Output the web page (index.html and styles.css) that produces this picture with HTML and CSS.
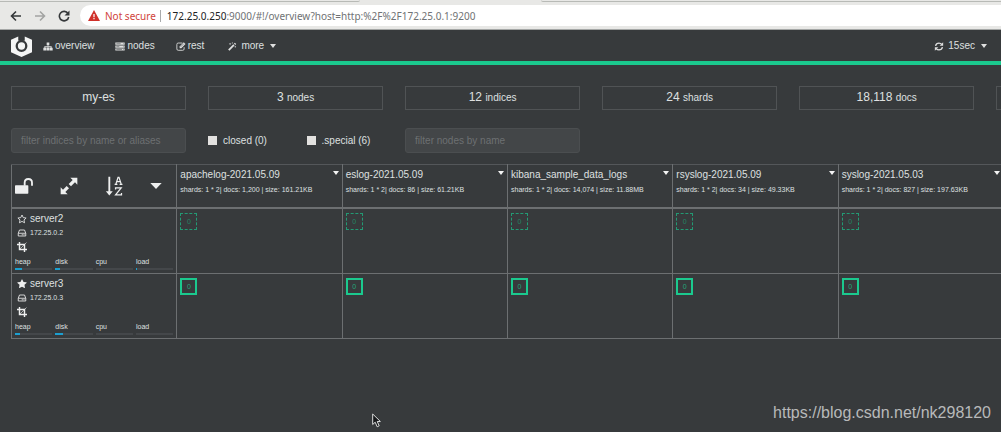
FILE: index.html
```html
<!DOCTYPE html>
<html lang="en">
<head>
<meta charset="utf-8">
<title>my-es overview</title>
<link rel="stylesheet" href="styles.css">
</head>
<body>
<svg class="defs" aria-hidden="true">
  <symbol id="caret" viewBox="0 0 6 4"><path d="M0 0h6L3 4z"/></symbol>
  <symbol id="host" viewBox="0 0 18 16"><path fill="none" stroke="currentColor" stroke-width="1.7" d="M1.5 8.5 4 2h10l2.500 6.500V14h-15zM1.500 8.500h15"/><path d="M8.500 10.500h2v2h-2zM12 10.500h2v2h-2z"/></symbol>
  <symbol id="crop" viewBox="0 0 18 18"><path fill="none" stroke="currentColor" stroke-width="2.600" d="M0 4.500h13.500V18M4.500 0v13.500H18"/><path fill="none" stroke="currentColor" stroke-width="1.200" d="M5 13 17 1"/></symbol>
  <symbol id="star" viewBox="0 0 1792 1792"><path d="M1728 647q0 22-26 48l-363 354 86 500q1 7 1 20 0 21-10.5 35.5t-30.5 14.5q-19 0-40-12l-449-236-449 236q-22 12-40 12-21 0-31.5-14.5t-10.5-35.5q0-6 2-20l86-500-364-354q-25-27-25-48 0-37 56-46l502-73 225-455q19-41 49-41t49 41l225 455 502 73q56 9 56 46z"/></symbol>
  <symbol id="star-o" viewBox="0 0 18 18"><path fill="none" stroke="currentColor" stroke-width="1.500" stroke-linejoin="round" d="m9 1.800 2.200 4.700 5.200.7-3.800 3.500 1 5.100L9 13.300l-4.600 2.500 1-5.100-3.800-3.500 5.200-.7z"/></symbol>
</svg>

<header class="browser">
  <div class="tabs"><span class="tab-edge tab-left"></span><span class="tab-edge tab-right"></span></div>
  <div class="toolbar">
    <button class="tool" aria-label="Back"><svg viewBox="0 0 12 12"><path d="M11 6H1.500M6 1.500 1.500 6 6 10.500"/></svg></button>
    <button class="tool tool-off" aria-label="Forward"><svg viewBox="0 0 12 12"><path d="M1 6h9.500M6 1.500 10.500 6 6 10.500"/></svg></button>
    <button class="tool" aria-label="Reload"><svg viewBox="0 0 12 12"><path d="M10 3.500A4.700 4.700 0 1 0 10.700 7"/><path class="tip" d="M11.500.5v5h-5z"/></svg></button>
    <div class="address">
      <svg class="warn" viewBox="0 0 12 11"><path fill="#d0312a" d="M6 0 12 11H0z"/><path fill="#fff" d="M5.400 4h1.200v3.200H5.400zM5.400 8h1.200v1.300H5.400z"/></svg>
      <span class="insecure">Not secure</span>
      <span class="url"><b>172.25.0.250</b>:9000/#!/overview?host=http:%2F%2F172.25.0.1:9200</span>
    </div>
  </div>
</header>

<nav class="navbar">
  <a class="logo" href="#" aria-label="Home"><svg viewBox="0 0 22 23"><path fill="#f4f5f5" d="M7.600 1.500 0 5v13l11 5 11-5V5l-7.600-3.500V6h-1.900V.5h-3V6H7.600z"/><circle cx="11" cy="11.500" r="5" fill="none" stroke="#373a3c" stroke-width="2.400"/><path fill="#373a3c" d="M9 0h4v7H9z"/></svg></a>
  <a class="item" href="#"><svg viewBox="0 0 30 26" class="nav-icon"><path d="M11 1h8v8h-3v3h10v5h3v8h-9v-8h3v-2h-7v2h3v8h-8v-8h3v-2H7v2h3v8H1v-8h3v-5h10V9h-3z"/></svg>overview</a>
  <a class="item" href="#"><svg viewBox="0 0 30 26" class="nav-icon"><path d="M1 1h28v7H1zM1 10h28v7H1zM1 19h28v6H1z"/><path stroke="#373a3c" stroke-width="1.500" d="M4 4.500h13M4 13.500h9M4 22h17M24 4.500h2M24 13.500h2M24 22h2"/></svg>nodes</a>
  <a class="item" href="#"><svg viewBox="0 0 28 26" class="nav-icon"><path fill="none" stroke="currentColor" stroke-width="2.500" d="M18 3H6Q2 3 2 7v13q0 4 4 4h13q4 0 4-4v-5"/><path d="m10 13 12-12 5 5-12 12H10z"/><path stroke="#373a3c" stroke-width="1.500" d="m13 14 9-9"/></svg>rest</a>
  <a class="item more" href="#"><svg viewBox="0 0 28 28" class="nav-icon"><path d="m2 23 16-16 4 4L6 27zM20 5l3-3 4 4-3 3zM8 2l1 3 3 1-3 1-1 3-1-3-3-1 3-1zM15 0l.8 2 2 .8-2 .8-.8 2-.8-2-2-.8 2-.8zM24 12l1 2 2 1-2 1-1 2-1-2-2-1 2-1z"/></svg><span class="gap">more</span><svg class="caret"><use href="#caret"/></svg></a>
  <a class="item refresh" href="#"><svg viewBox="0 0 26 26" class="nav-icon"><path fill="none" stroke="currentColor" stroke-width="3.800" d="M3 11q2-8 10-8 5 0 8 4M23 15q-2 8-10 8-5 0-8-4"/><path d="M25 1v10H15zM1 25V15h10z"/></svg><span class="gap">15sec</span><svg class="caret"><use href="#caret"/></svg></a>
</nav>

<main class="page">
  <section class="grid stats">
    <div class="stat">my-es</div>
    <div class="stat">3 <small>nodes</small></div>
    <div class="stat">12 <small>indices</small></div>
    <div class="stat">24 <small>shards</small></div>
    <div class="stat">18,118 <small>docs</small></div>
    <div class="stat"></div>
  </section>

  <form class="grid filters">
    <input class="field" type="text" aria-label="Filter indices" placeholder="filter indices by name or aliases">
    <div class="checks">
      <label><input type="checkbox">closed (0)</label>
      <label><input type="checkbox">.special (6)</label>
    </div>
    <input class="field" type="text" aria-label="Filter nodes" placeholder="filter nodes by name">
  </form>

  <table class="cluster">
    <thead>
      <tr>
        <th>
          <div class="actions">
            <button aria-label="Disable allocation"><svg viewBox="0 0 54 48"><path d="M2 22h36q2 0 2 2v21q0 2-2 2H2q-2 0-2-2V24q0-2 2-2z"/><path fill="none" stroke="currentColor" stroke-width="5.500" d="M29 23v-9q0-11 11-11t11 11v9"/></svg></button>
            <button aria-label="Expand"><svg viewBox="0 0 54 54"><path d="M31 2h21v21l-7-7-12 12-7-7L38 9zM2 52V31l7 7 11-11 7 7-11 11 7 7z"/></svg></button>
            <button aria-label="Sort by name"><svg viewBox="0 0 54 64"><path d="M9 2h6v47h8L12 62 1 49h8z"/><path fill="none" stroke="currentColor" stroke-width="4" d="M33 26 40 4h3l7 22M36 18h12M29 27h9M45 27h9M32 43v-5h18L32 60h19v-6"/></svg></button>
            <button aria-label="More"><svg class="drop" viewBox="0 0 34 18"><path d="M0 0h34L17 18z"/></svg></button>
          </div>
        </th>
        <th><div class="index"><div><a href="#">apachelog-2021.05.09</a><p>shards: 1 * 2| docs: 1,200 | size: 161.21KB</p></div><svg class="caret"><use href="#caret"/></svg></div></th>
        <th><div class="index"><div><a href="#">eslog-2021.05.09</a><p>shards: 1 * 2| docs: 86 | size: 61.21KB</p></div><svg class="caret"><use href="#caret"/></svg></div></th>
        <th><div class="index"><div><a href="#">kibana_sample_data_logs</a><p>shards: 1 * 2| docs: 14,074 | size: 11.88MB</p></div><svg class="caret"><use href="#caret"/></svg></div></th>
        <th><div class="index"><div><a href="#">rsyslog-2021.05.09</a><p>shards: 1 * 2| docs: 34 | size: 49.33KB</p></div><svg class="caret"><use href="#caret"/></svg></div></th>
        <th><div class="index"><div><a href="#">syslog-2021.05.03</a><p>shards: 1 * 2| docs: 827 | size: 197.63KB</p></div><svg class="caret"><use href="#caret"/></svg></div></th>
      </tr>
    </thead>
    <tbody>
      <tr>
        <td>
          <div class="node">
            <div class="line name"><svg><use href="#star-o"/></svg>server2</div>
            <div class="line ip"><svg><use href="#host"/></svg>172.25.0.2</div>
            <div class="line"><svg><use href="#crop"/></svg></div>
            <div class="meters">
              <div>heap<i><b style="width:19%"></b></i></div>
              <div>disk<i><b style="width:13%"></b></i></div>
              <div>cpu<i></i></div>
              <div>load<i><b style="width:3%"></b></i></div>
            </div>
          </div>
        </td>
        <td><span class="shard replica">0</span></td>
        <td><span class="shard replica">0</span></td>
        <td><span class="shard replica">0</span></td>
        <td><span class="shard replica">0</span></td>
        <td><span class="shard replica">0</span></td>
      </tr>
      <tr>
        <td>
          <div class="node">
            <div class="line name"><svg><use href="#star"/></svg>server3</div>
            <div class="line ip"><svg><use href="#host"/></svg>172.25.0.3</div>
            <div class="line"><svg><use href="#crop"/></svg></div>
            <div class="meters">
              <div>heap<i><b style="width:13%"></b></i></div>
              <div>disk<i><b style="width:20%"></b></i></div>
              <div>cpu<i></i></div>
              <div>load<i></i></div>
            </div>
          </div>
        </td>
        <td><span class="shard">0</span></td>
        <td><span class="shard">0</span></td>
        <td><span class="shard">0</span></td>
        <td><span class="shard">0</span></td>
        <td><span class="shard">0</span></td>
      </tr>
    </tbody>
  </table>
</main>

<svg class="cursor" viewBox="0 0 9 15"><path fill="#16181a" stroke="#dcdddd" d="M.7 1v10.500l2.500-2.300 2 4.600 2-1-2-4.300h3.200z"/></svg>
<div class="watermark">https://blog.csdn.net/nk298120</div>
</body>
</html>
```
FILE: styles.css
```css
* { box-sizing: border-box; }

body {
  margin: 0;
  min-height: 100vh;
  position: relative;
  overflow: hidden;
  background: #373a3c;
  color: #dfe0e0;
  font: 10px/14px "Liberation Sans", Arial, sans-serif;
}

a { color: inherit; text-decoration: none; }
button { padding: 0; border: 0; background: none; color: inherit; }
svg { display: block; flex: none; fill: currentColor; }
.defs { position: absolute; width: 0; height: 0; }
.caret { width: 6px; height: 4px; }

/* Browser chrome */
.browser { background: #e8e8e6; border-bottom: 1px solid #a5a7a6; }
.tabs { display: flex; justify-content: space-between; height: 5px; }
.tab-edge { height: 2px; border-bottom: 1px solid #b8bab6; }
.tab-left { width: 36%; border-bottom-right-radius: 4px; }
.tab-right { width: 46%; border-bottom-left-radius: 4px; }
.toolbar { display: flex; align-items: center; gap: 12px; padding: 0 0 3px 10px; }
.tool svg { width: 12px; height: 12px; fill: none; stroke: #35383a; stroke-width: 1.6; }
.tool .tip { fill: #35383a; stroke: none; }
.tool-off svg { stroke: #a2a3a2; }
.address {
  flex: 1;
  display: flex;
  align-items: center;
  height: 21px;
  margin-left: -2px;
  padding-left: 8px;
  border-radius: 11px 0 0 11px;
  background: #fff;
  font: 10px/14px "Noto Sans", sans-serif;
  color: #6f7274;
}
.warn { width: 12px; height: 11px; }
.insecure { margin-left: 5px; padding-right: 4px; border-right: 1px solid #a9abac; line-height: 12px; color: #d0433b; }
.url { margin-left: 6px; }
.url b { font-weight: 400; color: #202224; }

/* Navigation */
.navbar {
  display: flex;
  align-items: center;
  height: 35px;
  padding: 1px 14px 0 11px;
  border-bottom: 4px solid #1bc98e;
}
.logo svg { width: 21px; height: 22px; }
.item { display: flex; align-items: center; gap: 2px; margin-left: 21px; }
.logo + .item { margin-left: 11px; }
.nav-icon { width: 10px; height: 9px; }
.gap { margin: 0 4px 0 2px; }
.item.more { margin-left: 23px; }
.item.refresh { margin-left: auto; }

/* Overview */
.page { padding: 21px 0 0 11px; overflow: hidden; }
.grid { display: grid; grid-template-columns: repeat(6, 1fr); gap: 22px; width: 117.2%; }
.stat {
  height: 24px;
  border: 1px solid #505355;
  font-size: 12px;
  line-height: 21px;
  text-align: center;
}
.stat small { font-size: 10px; }
.filters { margin-top: 18px; align-items: center; }
.field {
  width: 100%;
  height: 25px;
  padding: 0 9px;
  border: 1px solid #4b4e50;
  border-radius: 3px;
  background: #434648;
  color: #dfe0e0;
  font: inherit;
}
.field::placeholder { color: #6d7072; opacity: 1; }
.checks { display: grid; grid-template-columns: 1fr 1fr; gap: 22px; }
.checks label { display: flex; align-items: center; gap: 6px; white-space: nowrap; }
.checks input { appearance: none; width: 9px; height: 9px; margin: 0; background: #e2e1df; }

.cluster {
  width: calc(100% + 3px);
  margin-top: 11px;
  table-layout: fixed;
  border-collapse: collapse;
}
.cluster th, .cluster td {
  padding: 3px;
  border: 1px solid #6c6f71;
  font-weight: 400;
  text-align: left;
  vertical-align: top;
}
.cluster th { border-top-color: #54575a; border-bottom-width: 2px; }
.actions { display: flex; align-items: center; justify-content: space-between; height: 36px; padding-right: 11px; }
.actions svg { width: 18px; height: 20px; color: #eeefef; }
.actions .drop { width: 12px; height: 6px; }
.index { display: flex; justify-content: space-between; white-space: nowrap; }
.index p { margin: 3px 0 0; font-size: 7px; line-height: 10px; }
.index .caret { margin-top: 3px; color: #f4f4f4; }

.node { height: 58px; display: flex; flex-direction: column; }
.line { display: flex; align-items: center; gap: 3px; height: 14px; padding-left: 2px; }
.line svg { width: 10px; height: 10px; color: #eeefef; }
.ip svg { height: 8px; }
.ip { font-size: 7px; }
.meters { display: grid; grid-template-columns: repeat(4, 1fr); gap: 3px; margin-top: auto; font-size: 7px; line-height: 10px; }
.meters i { display: block; height: 2px; margin-top: 1px; background: #44474a; }
.meters b { display: block; height: 2px; background: #1c9fd0; }

.shard {
  display: block;
  width: 17px;
  height: 17px;
  margin-top: 1px;
  border: 2px solid #1bc98e;
  color: #23a67b;
  font-size: 7px;
  line-height: 14px;
  text-align: center;
}
.replica { border: 1px dashed #239a74; line-height: 16px; color: #228564; }

/* Overlays */
.cursor { position: absolute; left: 37.2%; bottom: 4px; width: 9px; height: 15px; }
.watermark { position: absolute; right: 10px; bottom: 9px; font-size: 16px; line-height: 20px; color: #b7b9ba; }
```
